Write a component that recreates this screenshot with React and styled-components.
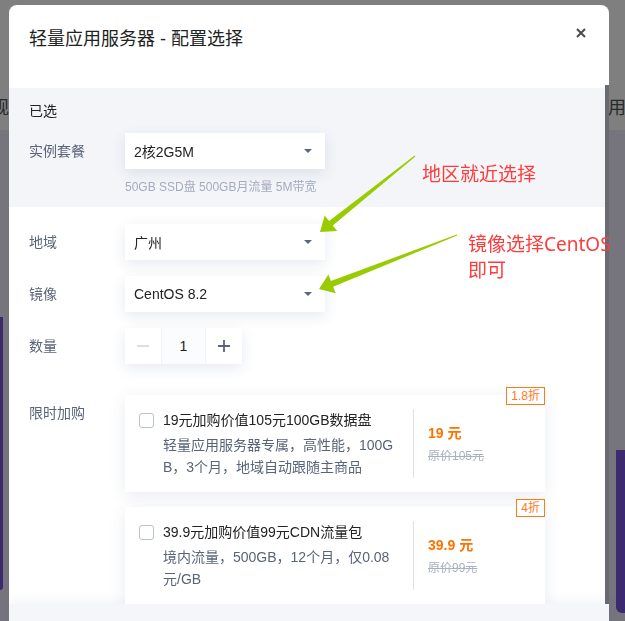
import React from 'react'
import styled, { createGlobalStyle } from 'styled-components'

const GlobalStyle = createGlobalStyle`
  html, body {
    margin: 0;
    padding: 0;
  }
  body {
    width: 625px;
    height: 621px;
    overflow: hidden;
    font-family: "Liberation Sans", "Noto Sans CJK SC", sans-serif;
  }
  * {
    box-sizing: border-box;
  }
`

// page behind the dialog (mostly hidden by the mask)
const Page = styled.div`
  width: 625px;
  height: 621px;
  background: #fefefe;
  display: flex;
  flex-direction: column;
  overflow: hidden;
`
const PageNav = styled.div`
  height: 130px;
  flex-shrink: 0;
  display: flex;
  justify-content: space-between;
  align-items: flex-start;
  padding-top: 96px;
  font-size: 18px;
  line-height: 24px;
  color: #555;
  span:first-child {
    margin-left: -9px;
  }
  span:last-child {
    margin-right: -1px;
  }
`
const PageBand = styled.div`
  flex: 1;
  background: #ece9fb;
  display: flex;
  justify-content: space-between;
  align-items: flex-start;
`
const Banner = styled.div`
  width: ${(p) => p.$w}px;
  height: ${(p) => p.$h}px;
  margin-top: ${(p) => p.$top}px;
  background: #7654dc;
  border-radius: ${(p) => p.$radius};
`
const Mask = styled.div`
  position: fixed;
  inset: 0;
  background: rgba(0, 0, 0, 0.5);
`

// dialog
const Dialog = styled.div`
  position: fixed;
  top: 5px;
  left: 9px;
  width: 600px;
  background: #fff;
  border-radius: 8px 8px 0 0;
  display: flex;
  flex-direction: column;
`
const Header = styled.div`
  height: 80px;
  display: flex;
  justify-content: space-between;
  align-items: flex-start;
  padding: 20px 23px 0 20px;
`
const Title = styled.h2`
  margin: 0;
  font-size: 18px;
  font-weight: normal;
  line-height: 28px;
  color: #222;
`
const Close = styled.button`
  width: 10px;
  height: 10px;
  margin-top: 3px;
  padding: 0;
  border: 0;
  background: none;
  display: flex;
`
const Body = styled.div`
  height: 519px;
  overflow: hidden;
  padding-top: 3px;
  border-right: 4px solid #6b6a73;
`
const Footer = styled.div`
  height: 40px;
  background: #f5f6f9;
  box-shadow: 0 -4px 10px rgba(60, 80, 130, 0.06);
`
const Selected = styled.section`
  background: #f3f5f9;
  padding: 12px 20px 13px;
`
const SectionTitle = styled.div`
  font-size: 14px;
  line-height: 22px;
  color: #222;
  margin-bottom: 11px;
`
const Hint = styled.div`
  margin: 11px 0 0 96px;
  font-size: 12px;
  line-height: 14px;
  color: #a3abbe;
`
const Config = styled.section`
  padding: 17px 20px 0;
  display: flex;
  flex-direction: column;
  gap: 16px;
`
const Row = styled.div`
  display: flex;
  align-items: ${(p) => (p.$top ? 'flex-start' : 'center')};
  margin-top: ${(p) => p.$offset || 0}px;
`
const Label = styled.div`
  width: 96px;
  flex-shrink: 0;
  font-size: 14px;
  line-height: 22px;
  color: #5a6478;
  padding-top: ${(p) => p.$pad || 0}px;
`
const Select = styled.div`
  width: 200px;
  height: 36px;
  background: #fff;
  box-shadow: 0 4px 14px rgba(50, 70, 120, 0.12);
  display: flex;
  align-items: center;
  justify-content: space-between;
  padding: 0 13px 0 9px;
  font-size: 14px;
  color: #222;
`
const Caret = styled.span`
  width: 0;
  height: 0;
  border-left: 4px solid transparent;
  border-right: 4px solid transparent;
  border-top: 4px solid #5d6680;
`
const Stepper = styled.div`
  display: flex;
  height: 36px;
  box-shadow: 0 4px 14px rgba(50, 70, 120, 0.12);
`
const StepButton = styled.div`
  width: 36px;
  background: #fff;
  display: flex;
  align-items: center;
  justify-content: center;
`
const StepValue = styled.div`
  width: 45px;
  background: #fbfcfd;
  border-left: 1px solid #f0f2f6;
  border-right: 1px solid #f0f2f6;
  display: flex;
  align-items: center;
  justify-content: center;
  font-size: 14px;
  color: #222;
`
const Cards = styled.div`
  width: 420px;
  display: flex;
  flex-direction: column;
  gap: 15px;
`
const Card = styled.div`
  position: relative;
  background: #fff;
  box-shadow: 0 4px 16px rgba(50, 70, 120, 0.1);
  display: flex;
  align-items: stretch;
  padding: 14px 0 14px 14px;
`
const Badge = styled.span`
  position: absolute;
  top: -8px;
  right: 0;
  height: 18px;
  padding: 0 4px;
  border: 1px solid #ff7a1a;
  background: #fff;
  color: #ff7a1a;
  font-size: 12px;
  line-height: 16px;
`
const Checkbox = styled.span`
  width: 15px;
  height: 15px;
  flex-shrink: 0;
  margin: 4px 9px 0 0;
  border: 1px solid #b8bfcf;
  border-radius: 3px;
  background: #fff;
`
const CardText = styled.div`
  width: 236px;
  margin-right: 14px;
`
const CardTitle = styled.div`
  font-size: 14px;
  line-height: 22px;
  color: #222;
`
const CardDesc = styled.div`
  margin-top: 3px;
  font-size: 14px;
  line-height: 22px;
  color: #5a6478;
  word-break: break-all;
`
const Divider = styled.div`
  width: 1px;
  background: #dde1ea;
`
const PriceCol = styled.div`
  padding-left: 14px;
  display: flex;
  flex-direction: column;
  justify-content: center;
`
const Price = styled.div`
  font-size: 14px;
  font-weight: bold;
  line-height: 22px;
  color: #ff7200;
`
const OldPrice = styled.div`
  margin-top: 2px;
  font-size: 12px;
  line-height: 20px;
  color: #a8b0c2;
  text-decoration: line-through;
`

// screenshot annotations drawn on top
const Annotations = styled.div`
  position: fixed;
  inset: 0;
  pointer-events: none;
`
const Note = styled.div`
  position: absolute;
  left: ${(p) => p.$x}px;
  top: ${(p) => p.$y}px;
  font-family: "Noto Sans", "Noto Sans CJK SC", sans-serif;
  font-size: 19px;
  line-height: 26px;
  color: #ff3b3b;
  white-space: nowrap;
`

function arrow(tx, ty, px, py, head = 14, half = 10, neck = 3) {
  const len = Math.hypot(px - tx, py - ty)
  const ux = (px - tx) / len
  const uy = (py - ty) / len
  const nx = -uy
  const ny = ux
  const bx = px - ux * head
  const by = py - uy * head
  const pts = [
    [tx + nx * 0.6, ty + ny * 0.6],
    [bx + nx * neck, by + ny * neck],
    [bx + nx * half, by + ny * half],
    [px, py],
    [bx - nx * half, by - ny * half],
    [bx - nx * neck, by - ny * neck],
    [tx - nx * 0.6, ty - ny * 0.6],
  ]
  return pts.map((p) => p.map((v) => v.toFixed(1)).join(',')).join(' ')
}

const addons = [
  {
    id: 1,
    badge: '1.8折',
    title: '19元加购价值105元100GB数据盘',
    desc: '轻量应用服务器专属，高性能，100GB，3个月，地域自动跟随主商品',
    price: '19 元',
    old: '原价105元',
  },
  {
    id: 2,
    badge: '4折',
    title: '39.9元加购价值99元CDN流量包',
    desc: '境内流量，500GB，12个月，仅0.08元/GB',
    price: '39.9 元',
    old: '原价99元',
  },
]

export default function App() {
  return (
    <>
      <GlobalStyle />
      <Page>
        <PageNav>
          <span>规格</span>
          <span>应用</span>
        </PageNav>
        <PageBand>
          <Banner $w={3} $h={273} $top={187} $radius="0 0 3px 0" />
          <Banner $w={9} $h={163} $top={320} $radius="0 0 0 6px" />
        </PageBand>
      </Page>
      <Mask />
      <Dialog>
        <Header>
          <Title>轻量应用服务器 - 配置选择</Title>
          <Close>
            <svg width="10" height="10" viewBox="0 0 10 10">
              <path d="M1 1L9 9M9 1L1 9" stroke="#4a4a4a" strokeWidth="2" />
            </svg>
          </Close>
        </Header>
        <Body>
          <Selected>
            <SectionTitle>已选</SectionTitle>
            <Row>
              <Label>实例套餐</Label>
              <Select>
                2核2G5M
                <Caret />
              </Select>
            </Row>
            <Hint>50GB SSD盘 500GB月流量 5M带宽</Hint>
          </Selected>
          <Config>
            <Row>
              <Label>地域</Label>
              <Select>
                广州
                <Caret />
              </Select>
            </Row>
            <Row>
              <Label>镜像</Label>
              <Select>
                CentOS 8.2
                <Caret />
              </Select>
            </Row>
            <Row>
              <Label>数量</Label>
              <Stepper>
                <StepButton>
                  <svg width="12" height="12" viewBox="0 0 12 12">
                    <path d="M0 6H12" stroke="#d3d7df" strokeWidth="1.6" />
                  </svg>
                </StepButton>
                <StepValue>1</StepValue>
                <StepButton>
                  <svg width="12" height="12" viewBox="0 0 12 12">
                    <path d="M0 6H12M6 0V12" stroke="#5a6478" strokeWidth="1.8" />
                  </svg>
                </StepButton>
              </Stepper>
            </Row>
            <Row $top $offset={15}>
              <Label $pad={7}>限时加购</Label>
              <Cards>
                {addons.map((a) => (
                  <Card key={a.id}>
                    <Badge>{a.badge}</Badge>
                    <Checkbox />
                    <CardText>
                      <CardTitle>{a.title}</CardTitle>
                      <CardDesc>{a.desc}</CardDesc>
                    </CardText>
                    <Divider />
                    <PriceCol>
                      <Price>{a.price}</Price>
                      <OldPrice>{a.old}</OldPrice>
                    </PriceCol>
                  </Card>
                ))}
              </Cards>
            </Row>
          </Config>
        </Body>
        <Footer />
      </Dialog>
      <Annotations>
        <svg width="625" height="621" viewBox="0 0 625 621">
          <polygon points={arrow(415, 156, 320, 232)} fill="#99cc00" />
          <polygon points={arrow(457, 235, 319, 289)} fill="#99cc00" />
        </svg>
        <Note $x={422} $y={161}>地区就近选择</Note>
        <Note $x={468} $y={231}>
          镜像选择CentOS
          <br />
          即可
        </Note>
      </Annotations>
    </>
  )
}
